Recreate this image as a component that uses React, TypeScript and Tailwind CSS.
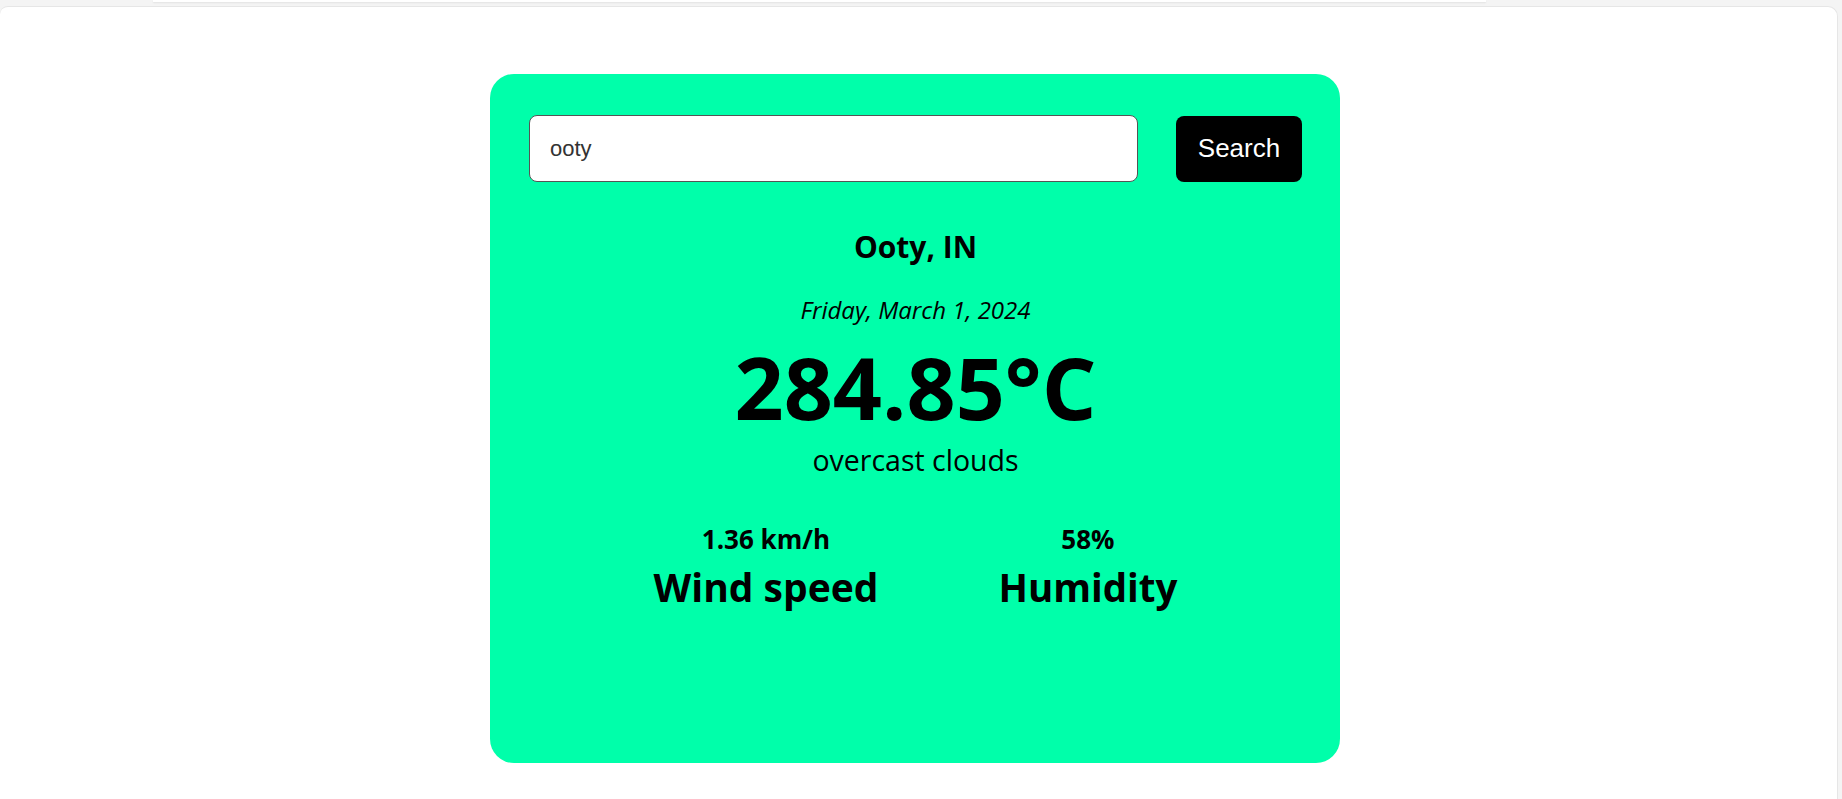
export default function App() {
  return (
    <div className="h-[799px] overflow-hidden bg-[#f4f4f4]">
      {/* browser chrome sliver */}
      <div className="flex h-[6px]">
        <div className="ml-[153px] h-[2px] w-[1333px] bg-white shadow-[0_1px_2px_rgba(0,0,0,0.08)]" />
      </div>

      <main className="mr-[4px] h-[793px] rounded-tl-[8px] rounded-tr-[10px] border-t border-r border-[#e6e6e6] bg-white pl-[490px] pt-[67px]">
        <div className="flex h-[689px] w-[850px] flex-col rounded-[24px] bg-[#00ffaa] pl-[39px] pr-[38px] pt-[41px] text-black">
          {/* Search row */}
          <div className="flex items-center gap-[38px]">
            <input
              type="text"
              defaultValue="ooty"
              className="h-[67px] flex-1 rounded-[8px] border border-[#555] bg-white px-[20px] text-[22px] text-[#333] outline-none"
              style={{ fontFamily: '"Liberation Sans", Arial, sans-serif' }}
            />
            <button
              type="button"
              className="h-[66px] w-[126px] rounded-[8px] bg-black text-[26px] text-white"
              style={{ fontFamily: '"Liberation Sans", Arial, sans-serif' }}
            >
              Search
            </button>
          </div>

          {/* Weather info */}
          <div className="flex flex-col items-center font-['Open_Sans',sans-serif]">
            <h2 className="mt-[47px] text-[30px] leading-[36px] font-bold">Ooty, IN</h2>
            <p className="mt-[31px] text-[24px] leading-[28px] italic">Friday, March 1, 2024</p>
            <p className="mt-[7px] text-[86px] leading-[112px] font-bold">284.85°C</p>
            <p className="mt-0 text-[28.5px] leading-[34px]">overcast clouds</p>

            <div className="mt-[47px] flex justify-center gap-[120px]">
              <div className="flex flex-col items-center">
                <p className="text-[26px] leading-[30px] font-bold">1.36 km/h</p>
                <p className="mt-[9px] text-[39px] leading-[48px] font-bold">Wind speed</p>
              </div>
              <div className="flex flex-col items-center">
                <p className="text-[26px] leading-[30px] font-bold">58%</p>
                <p className="mt-[9px] text-[38.5px] leading-[48px] font-bold">Humidity</p>
              </div>
            </div>
          </div>
        </div>
      </main>
    </div>
  );
}
